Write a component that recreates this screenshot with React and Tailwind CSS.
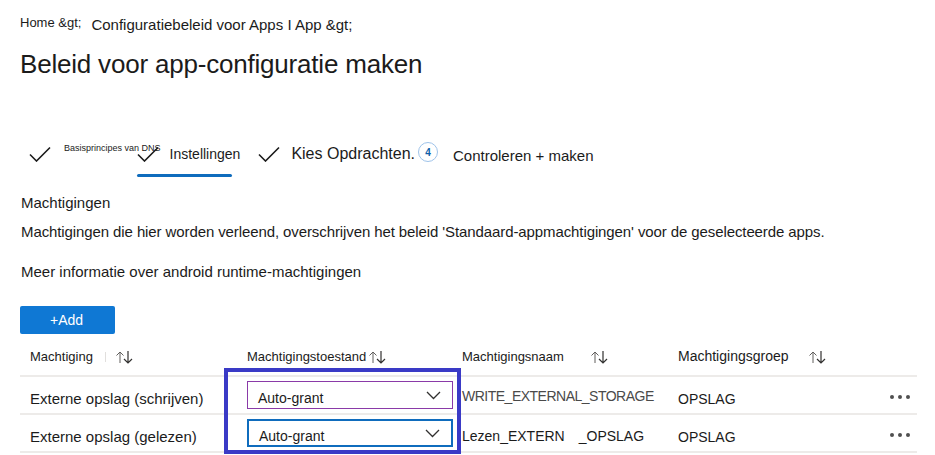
import React from 'react';

function Check({ className = '' }) {
    return (
        <svg width="22" height="16" viewBox="0 0 22 16" className={`shrink-0 ${className}`}>
            <path d="M1 8.5 L7.5 15 L21 1.5" fill="none" stroke="#1b1b1b" strokeWidth="1.6" />
        </svg>
    );
}

function SortArrows() {
    return (
        <svg width="20" height="16" viewBox="0 0 20 16" className="shrink-0">
            <path d="M5 14 V3 M1.5 6.5 L5 3 L8.5 6.5" fill="none" stroke="#605e5c" strokeWidth="1" />
            <path d="M13 2 V14 M9 10 L13 14 L17 10" fill="none" stroke="#323130" strokeWidth="1.2" />
        </svg>
    );
}

function Chevron() {
    return (
        <svg width="15" height="9" viewBox="0 0 15 9" className="shrink-0">
            <path d="M1 1 L7.5 7.5 L14 1" fill="none" stroke="#323130" strokeWidth="1.3" />
        </svg>
    );
}

function Dots() {
    return (
        <div className="flex gap-[4px]">
            <span className="w-[4px] h-[4px] rounded-full bg-[#505050]" />
            <span className="w-[4px] h-[4px] rounded-full bg-[#505050]" />
            <span className="w-[4px] h-[4px] rounded-full bg-[#505050]" />
        </div>
    );
}

const rows = [
    { name: 'Externe opslag (schrijven)', perm: ['WRITE_EXTERNAL_STORAGE'], group: 'OPSLAG', border: 'border border-[#8a3aa8]' },
    { name: 'Externe opslag (gelezen)', perm: ['Lezen_EXTERN', '_OPSLAG'], group: 'OPSLAG', border: 'border-2 border-[#0f6cbd]' },
];

export default function App() {
    return (
        <div className="w-[935px] h-[455px] bg-white overflow-hidden text-[#1b1b1b]" style={{ fontFamily: '"Liberation Sans", Arial, sans-serif' }}>
            {/* Breadcrumb */}
            <div className="flex items-end pl-[20px] pt-[15px]">
                <span className="text-[13px] leading-[15px]">Home &amp;gt;</span>
                <span className="text-[15px] leading-[17px] ml-[10px] -mb-[3px]">Configuratiebeleid voor Apps I App &amp;gt;</span>
            </div>

            {/* Title */}
            <h1 className="pl-[20px] mt-[19px] text-[26px] leading-[30px] font-normal tracking-[-0.2px]">Beleid voor app-configuratie maken</h1>

            {/* Wizard steps */}
            <div className="relative flex items-center pl-[29px] mt-[60px] h-[30px]">
                <Check />
                <span className="text-[9px] leading-[10px] ml-[13px] -mt-[12px]">Basisprincipes van DNS</span>
                <Check className="-ml-[24px]" />
                <span className="text-[14px] ml-[11px]">Instellingen</span>
                <Check className="ml-[18px]" />
                <span className="text-[16px] ml-[11px]">Kies Opdrachten.</span>
                <span className="ml-[3px] -mt-[4px] w-[20px] h-[20px] rounded-full border border-[#9ec3ea] flex items-center justify-center text-[10px] font-bold text-[#0f5fa8]">4</span>
                <span className="text-[15px] ml-[15px] mt-[4px]">Controleren + maken</span>
                <div className="absolute left-[137px] top-[35px] w-[95px] h-[3px] bg-[#0f6cbd] rounded-sm" />
            </div>

            {/* Description */}
            <div className="pl-[21px] mt-[25px] text-[15px] leading-[18px]">
                <p>Machtigingen</p>
                <p className="mt-[11px] tracking-[-0.1px]">Machtigingen die hier worden verleend, overschrijven het beleid 'Standaard-appmachtigingen' voor de geselecteerde apps.</p>
                <p className="mt-[22px]">Meer informatie over android runtime-machtigingen</p>
            </div>

            {/* Add button */}
            <div className="pl-[20px] mt-[25px]">
                <button className="w-[95px] h-[28px] bg-[#0f78d4] text-white text-[14px] rounded-[2px] flex items-center justify-center pr-[2px]">+Add</button>
            </div>

            {/* Table */}
            <div className="relative ml-[20px] w-[897px] mt-[7px] text-[15px]">
                <div className="grid grid-cols-[217px_215px_216px_212px_1fr] pl-[10px] h-[36px] pb-[3px] items-center border-b-2 border-[#edebe9] text-[13px]">
                    <div className="flex items-center">Machtiging<span className="ml-[12px] w-px h-[10px] bg-[#e1dfdd]" /><span className="ml-[9px]"><SortArrows /></span></div>
                    <div className="flex items-center">Machtigingstoestand<span className="ml-[2px]"><SortArrows /></span></div>
                    <div className="flex items-center">Machtigingsnaam<span className="ml-[26px]"><SortArrows /></span></div>
                    <div className="flex items-center text-[14px]">Machtigingsgroep<span className="ml-[19px]"><SortArrows /></span></div>
                    <div />
                </div>
                {rows.map((r) => (
                    <div key={r.name} className="grid grid-cols-[217px_215px_216px_212px_1fr] pl-[10px] h-[38px] items-center border-b-2 border-[#edebe9]">
                        <div className="pt-[8px]">{r.name}</div>
                        <div className={`w-[206px] h-[28px] ${r.border} flex items-center justify-between pl-[10px] pr-[11px] text-[14px]`}>
                            <span className="mt-[6px]">Auto-grant</span>
                            <Chevron />
                        </div>
                        <div className={`flex text-[14px] ${r.perm.length === 1 ? 'pt-[3px] text-[#4a4a4a] tracking-[-0.5px] text-[14.5px]' : 'pt-[6px]'}`}>
                            <span>{r.perm[0]}</span>
                            {r.perm[1] && <span className="ml-[14px]">{r.perm[1]}</span>}
                        </div>
                        <div className="pt-[8px] text-[14px]">{r.group}</div>
                        <div className="flex justify-end pr-[7px] pt-[3px]"><Dots /></div>
                    </div>
                ))}
                {/* highlight box */}
                <div className="absolute left-[204px] top-[27px] w-[237px] h-[86px] border-4 border-[#3a3ac6] pointer-events-none" />
            </div>
        </div>
    );
}
